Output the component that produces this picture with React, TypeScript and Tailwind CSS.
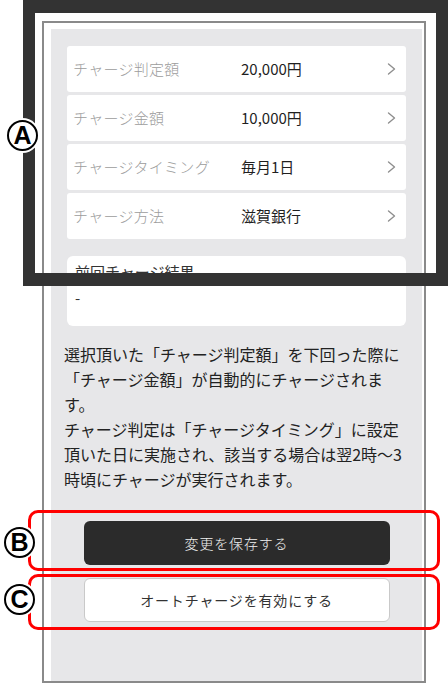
import { ReactNode } from "react";

const rows = [
  { label: "チャージ判定額", value: "20,000円" },
  { label: "チャージ金額", value: "10,000円" },
  { label: "チャージタイミング", value: "毎月1日" },
  { label: "チャージ方法", value: "滋賀銀行" },
];

function Chevron() {
  return (
    <svg width="9" height="12" viewBox="0 0 9 12" fill="none" className="block">
      <polyline points="1.5,1 7.5,6 1.5,11" stroke="#8e8e8e" strokeWidth="1.4" strokeLinecap="round" strokeLinejoin="round" />
    </svg>
  );
}

function SettingRow({ label, value }: { label: string; value: string }) {
  return (
    <div className="grid h-[46px] grid-cols-[168px_1fr_auto] items-center rounded-[3px] bg-white pl-[6px] pr-[10px]">
      <span className="text-[15px] font-light tracking-[0.02em] text-[#9c9c9c]">{label}</span>
      <span className="text-[15px] text-[#1f1f1f]">{value}</span>
      <Chevron />
    </div>
  );
}

function Marker({ children, className }: { children: ReactNode; className: string }) {
  return (
    <div className={`absolute rounded-full bg-white p-[2px] ${className}`}>
      <div className="flex h-[31px] w-[31px] items-center justify-center rounded-full border-[2.5px] border-black font-['Liberation_Sans',sans-serif] text-[25px] font-bold leading-none text-black">
        {children}
      </div>
    </div>
  );
}

export default function App() {
  return (
    <div className="relative h-[684px] w-[448px] overflow-hidden bg-white font-['Noto_Sans_CJK_JP',sans-serif]">
      <div className="ml-[42px] pt-[21px]">
        <div className="flex h-[662px] w-[384px] flex-col border-2 border-[#8a8a8a] bg-white pl-[7px] pr-[2px] pt-[6px]">
          <div className="flex-1 bg-[#e7e7e9] px-[16px] pt-[17px]">
            <div className="flex flex-col gap-[3px]">
              {rows.map((row) => (
                <SettingRow key={row.label} label={row.label} value={row.value} />
              ))}
            </div>
            <div className="mt-[17px] h-[70px] rounded-[6px] bg-white px-[8px] pt-[5px] text-[15px] leading-[22px] text-[#333]">
              <p>前回チャージ結果</p>
              <p className="mt-[4px]">-</p>
            </div>
            <p className="-ml-[3px] mt-[16px] w-[341px] text-[16px] leading-[25px] text-[#222]">
              選択頂いた「チャージ判定額」を下回った際に「チャージ金額」が自動的にチャージされます。
              <br />
              チャージ判定は「チャージタイミング」に設定頂いた日に実施され、該当する場合は翌2時〜3時頃にチャージが実行されます。
            </p>
            <div className="mx-auto mt-[29px] flex w-[306px] flex-col gap-[13px]">
              <button type="button" className="h-[44px] rounded-[6px] bg-[#2b2b2b] text-[14px] font-light tracking-[0.06em] text-[#f0f0f0]">
                変更を保存する
              </button>
              <button type="button" className="h-[44px] rounded-[6px] border border-[#c9c9c9] bg-white text-[14px] tracking-[0.06em] text-[#333]">
                オートチャージを有効にする
              </button>
            </div>
          </div>
        </div>
      </div>

      {/* annotation overlays */}
      <div className="absolute left-[23px] top-0 h-[286px] w-[425px] border-x-[12px] border-y-[13px] border-[#333]" />
      <div className="absolute left-[28px] top-[510px] h-[61px] w-[412px] rounded-[10px] border-[3px] border-[#ff0000]" />
      <div className="absolute left-[28px] top-[574px] h-[56px] w-[412px] rounded-[10px] border-[3px] border-[#ff0000]" />
      <Marker className="left-[5px] top-[118px]">A</Marker>
      <Marker className="left-[2px] top-[525px]">B</Marker>
      <Marker className="left-[2px] top-[582px]">C</Marker>
    </div>
  );
}
